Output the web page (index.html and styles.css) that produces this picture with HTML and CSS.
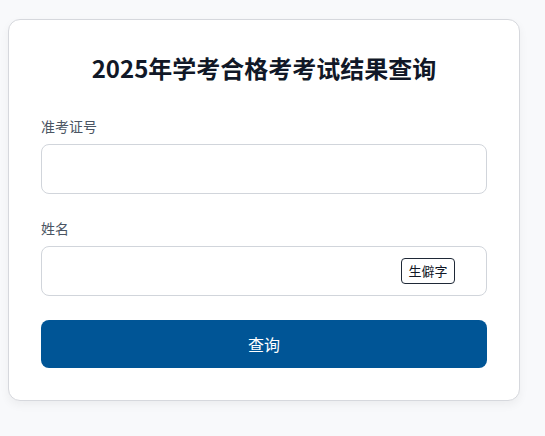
FILE: index.html
```html
<!DOCTYPE html>
<html lang="zh-CN">
<head>
<meta charset="utf-8">
<title>2025年学考合格考考试结果查询</title>
<link rel="stylesheet" href="styles.css">
</head>
<body>
<div class="card">
  <h1 class="title">2025年学考合格考考试结果查询</h1>
  <div class="field">
    <label class="label" for="ticket">准考证号</label>
    <input class="input" id="ticket" type="text">
  </div>
  <div class="field">
    <label class="label" for="name">姓名</label>
    <div class="input-wrap">
      <input class="input" id="name" type="text">
      <button class="rare-btn" type="button">生僻字</button>
    </div>
  </div>
  <button class="submit" type="button">查询</button>
</div>
</body>
</html>
```

FILE: styles.css
```css
* { box-sizing: border-box; }
html, body { margin: 0; padding: 0; }
body {
  background: #f8f9fb;
  font-family: "Noto Sans CJK SC", "Noto Sans", sans-serif;
  padding: 19px 8px;
}
.card {
  width: 512px;
  background: #ffffff;
  border: 1px solid #d6d8dd;
  border-radius: 12px;
  box-shadow: 0 4px 10px rgba(0, 0, 0, 0.05);
  padding: 32px;
}
.title {
  margin: 0 0 32px;
  font-size: 24px;
  line-height: 32px;
  font-weight: 700;
  color: #111827;
  text-align: center;
}
.field { margin-bottom: 24px; }
.label {
  display: block;
  font-size: 14px;
  line-height: 20px;
  color: #4b5563;
  margin-bottom: 8px;
}
.input-wrap { position: relative; }
.input {
  display: block;
  width: 100%;
  height: 50px;
  border: 1px solid #d1d5db;
  border-radius: 8px;
  background: #fff;
  padding: 0 12px;
  font-size: 16px;
  font-family: inherit;
  outline: none;
}
.rare-btn {
  position: absolute;
  right: 32px;
  top: 12px;
  width: 54px;
  height: 26px;
  border: 1px solid #1f2937;
  border-radius: 4px;
  background: #fff;
  color: #111827;
  font-family: inherit;
  font-size: 13px;
  line-height: 24px;
  padding: 0;
}
.submit {
  display: block;
  width: 100%;
  height: 48px;
  border: none;
  border-radius: 8px;
  background: #005596;
  color: #ffffff;
  font-family: inherit;
  font-size: 16px;
  padding: 0;
}
```
